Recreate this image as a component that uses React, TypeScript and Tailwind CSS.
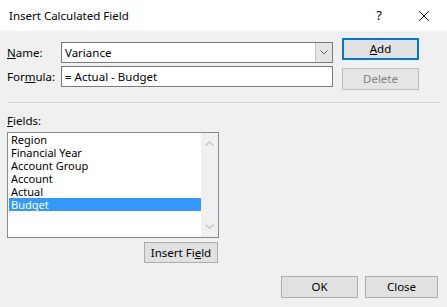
import React from 'react'

const fields = ['Region', 'Financial Year', 'Account Group', 'Account', 'Actual', 'Budget']

const Btn: React.FC<{ label: React.ReactNode; className?: string; disabled?: boolean; primary?: boolean }> = ({
  label,
  className = '',
  disabled,
  primary,
}) => {
  let look = 'border border-[#adadad] bg-[#e1e1e1] text-black'
  if (primary) look = 'border-2 border-[#0078d7] bg-[#e1e1e1] text-black'
  if (disabled) look = 'border border-[#bfbfbf] bg-[#e5e5e5] text-[#838383]'
  return <div className={`flex items-center justify-center text-[11.5px] ${look} ${className}`}>{label}</div>
}

export default function App() {
  return (
    <div
      className="w-[447px] h-[307px] bg-[#f0f0f0] overflow-hidden text-black"
      style={{ fontFamily: '"Noto Sans", "Liberation Sans", sans-serif' }}
    >
      <div className="h-[31px] bg-white flex items-center pl-[9px] pr-[14px]">
        <span className="text-[11.5px] flex-1">Insert Calculated Field</span>
        <span className="text-[13px] mr-[36px]">?</span>
        <svg width="12" height="12" viewBox="0 0 12 12" className="mr-[3px]">
          <path d="M1 1 L11 11 M11 1 L1 11" stroke="#111" strokeWidth="1" />
        </svg>
      </div>

      <div className="px-[7px]">
        <div className="flex">
          <div className="flex flex-col gap-[3px] pt-[11px] w-[326px]">
            <div className="flex items-center h-[21px]">
              <span className="w-[54px] text-[11.5px]">
                <u>N</u>ame:
              </span>
              <div className="w-[272px] h-[21px] bg-white border border-[#7a7a7a] flex items-center">
                <span className="flex-1 pl-[3px] text-[11.5px]">Variance</span>
                <div className="w-[17px] h-[19px] bg-[#e5e5e5] border-l border-[#c6c6c6] flex items-center justify-center">
                  <svg width="8" height="5" viewBox="0 0 8 5">
                    <path d="M0.5 0.5 L4 4 L7.5 0.5" stroke="#6d6d6d" strokeWidth="1" fill="none" />
                  </svg>
                </div>
              </div>
            </div>
            <div className="flex items-center h-[21px]">
              <span className="w-[54px] text-[11.5px]">
                For<u>m</u>ula:
              </span>
              <div className="w-[272px] h-[21px] bg-white border border-[#7a7a7a] flex items-center pl-[3px] text-[11.5px]">
                = Actual - Budget
              </div>
            </div>
          </div>
          <div className="flex flex-col gap-[8px] pt-[7px] ml-[9px]">
            <Btn primary label={<><u>A</u>dd</>} className="w-[77px] h-[22px]" />
            <Btn disabled label="Delete" className="w-[77px] h-[22px]" />
          </div>
        </div>

        <div className="mt-[12px] h-px bg-[#d5d5d5] w-[433px]" />

        <div className="mt-[10px] text-[11.5px] leading-[16px]">
          <u>F</u>ields:
        </div>
        <div className="mt-[3px] w-[212px] h-[106px] bg-white border border-[#828790] flex">
          <div className="flex-1 pl-px">
            {fields.map((f) => (
              <div
                key={f}
                className={`h-[13px] leading-[13px] pl-[2px] text-[11px] ${
                  f === 'Budget' ? 'bg-[#3399ff] text-white' : ''
                }`}
              >
                {f}
              </div>
            ))}
          </div>
          <div className="w-[17px] bg-[#f0f0f0] flex flex-col items-center justify-between py-[8px]">
            <svg width="9" height="5" viewBox="0 0 9 5">
              <path d="M0.5 4.5 L4.5 0.8 L8.5 4.5" stroke="#c2c2c2" strokeWidth="1.3" fill="none" />
            </svg>
            <svg width="9" height="5" viewBox="0 0 9 5">
              <path d="M0.5 0.5 L4.5 4.2 L8.5 0.5" stroke="#c2c2c2" strokeWidth="1.3" fill="none" />
            </svg>
          </div>
        </div>

        <div className="flex mt-[4px] pl-[137px]">
          <Btn label={<>Insert Fi<u>e</u>ld</>} className="w-[74px] h-[21px]" />
        </div>

        <div className="flex justify-end gap-[7px] mt-[13px] pr-[2px]">
          <Btn label="OK" className="w-[77px] h-[22px]" />
          <Btn label="Close" className="w-[73px] h-[22px]" />
        </div>
      </div>
    </div>
  )
}
